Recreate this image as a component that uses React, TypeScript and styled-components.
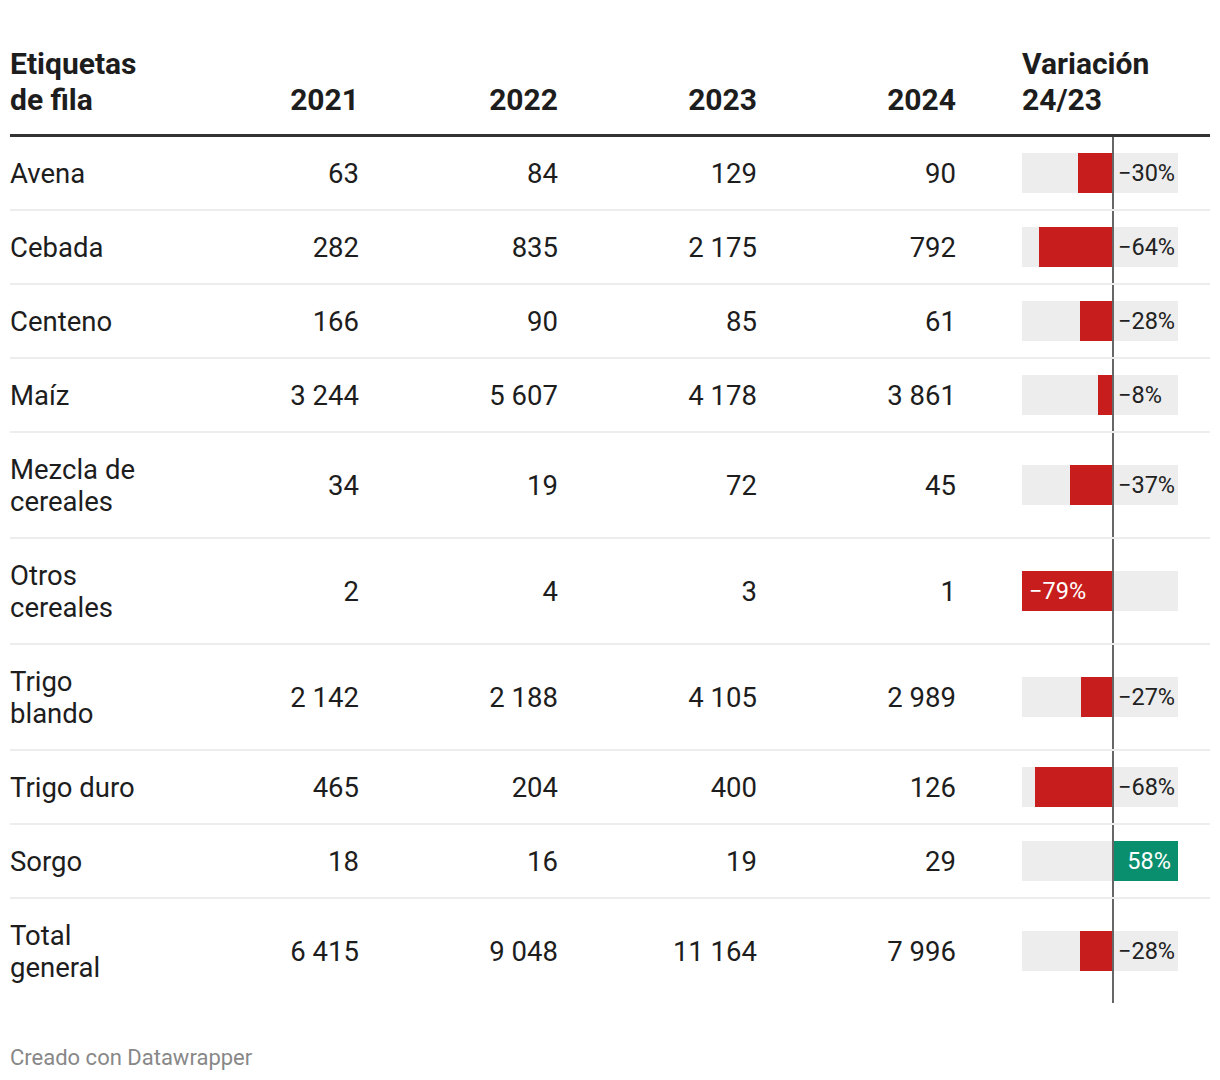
import React from "react";
import styled, { createGlobalStyle } from "styled-components";

const GlobalStyle = createGlobalStyle`
  html, body { margin: 0; padding: 0; background: #ffffff; }
  body { font-family: Roboto, "Liberation Sans", Arial, sans-serif; color: #1d1d1d; }
`;

const COLS = "149px 200px 199px 199px 199px 1fr";
const DOMAIN_MIN = -79;
const DOMAIN_MAX = 58;
const TRACK = 156;
const PX = TRACK / (DOMAIN_MAX - DOMAIN_MIN);
const NEG_W = Math.round(-DOMAIN_MIN * PX);
const POS_W = TRACK - NEG_W;

type Row = { label: string; values: string[]; change: number };

const rows: Row[] = [
  { label: "Avena", values: ["63", "84", "129", "90"], change: -30 },
  { label: "Cebada", values: ["282", "835", "2 175", "792"], change: -64 },
  { label: "Centeno", values: ["166", "90", "85", "61"], change: -28 },
  { label: "Maíz", values: ["3 244", "5 607", "4 178", "3 861"], change: -8 },
  { label: "Mezcla de cereales", values: ["34", "19", "72", "45"], change: -37 },
  { label: "Otros cereales", values: ["2", "4", "3", "1"], change: -79 },
  { label: "Trigo blando", values: ["2 142", "2 188", "4 105", "2 989"], change: -27 },
  { label: "Trigo duro", values: ["465", "204", "400", "126"], change: -68 },
  { label: "Sorgo", values: ["18", "16", "19", "29"], change: 58 },
  { label: "Total general", values: ["6 415", "9 048", "11 164", "7 996"], change: -28 },
];

const Page = styled.div`
  width: 1200px;
  padding: 46px 10px 0;
  font-family: Roboto, "Liberation Sans", Arial, sans-serif;
  color: #1d1d1d;
`;

const HeaderRow = styled.div`
  display: grid;
  grid-template-columns: ${COLS};
  align-items: end;
  padding-bottom: 16px;
  border-bottom: 3px solid #333333;
`;

const HeadCell = styled.div<{ $align?: "left" | "right"; $pad?: number }>`
  font-weight: 700;
  font-size: 30px;
  line-height: 36px;
  text-align: ${(p) => p.$align ?? "left"};
  padding-left: ${(p) => p.$pad ?? 0}px;
`;

const Body = styled.div`
  display: flex;
  flex-direction: column;
`;

const BodyRow = styled.div`
  display: grid;
  grid-template-columns: ${COLS};
  align-items: stretch;
  border-bottom: 2px solid #ededed;
  &:last-child {
    border-bottom: none;
  }
`;

const Cell = styled.div`
  display: flex;
  align-items: center;
  padding: 21px 0 19px;
  font-size: 27.5px;
  line-height: 32px;
`;

const LabelCell = styled(Cell)`
  padding-right: 14px;
`;

const NumCell = styled(Cell)`
  justify-content: flex-end;
  white-space: nowrap;
`;

const VarCell = styled(Cell)`
  position: relative;
  padding: 20px 0 20px 66px;
`;

const ZeroLine = styled.div`
  position: absolute;
  top: 0;
  bottom: 0;
  left: ${66 + NEG_W}px;
  width: 2px;
  background: #666666;
  z-index: 2;
`;

const Track = styled.div`
  display: grid;
  grid-template-columns: ${NEG_W}px ${POS_W}px;
  width: ${TRACK}px;
  height: 40px;
  margin: -4px 0;
  background: #ededed;
`;

const Side = styled.div<{ $end?: boolean }>`
  display: flex;
  justify-content: ${(p) => (p.$end ? "flex-end" : "flex-start")};
  align-items: stretch;
`;

const Bar = styled.div<{ $pos?: boolean; $labelRight?: boolean }>`
  display: flex;
  align-items: center;
  justify-content: ${(p) => (p.$labelRight ? "flex-end" : "flex-start")};
  padding: 0 7px;
  box-sizing: border-box;
  background: ${(p) => (p.$pos ? "#0a8f6e" : "#c71e1d")};
  color: #ffffff;
  font-size: 23.5px;
  white-space: nowrap;
`;

const OutLabel = styled.div`
  display: flex;
  align-items: center;
  padding-left: 6px;
  font-size: 23.5px;
  color: #222222;
  white-space: nowrap;
`;

const Footer = styled.div`
  margin-top: 41px;
  font-size: 22px;
  line-height: 28px;
  color: #888888;
`;

const fmt = (v: number) => (v < 0 ? `\u2212${Math.abs(v)}%` : `${v}%`);

function Variation({ value }: { value: number }) {
  const width = Math.abs(value) * PX;
  const inside = value === DOMAIN_MIN || value === DOMAIN_MAX;
  return (
    <VarCell>
      <Track>
        <Side $end>
          {value < 0 && (
            <Bar style={{ width }}>{inside ? fmt(value) : null}</Bar>
          )}
        </Side>
        <Side>
          {value > 0 ? (
            <Bar $pos $labelRight style={{ width }}>
              {inside ? fmt(value) : null}
            </Bar>
          ) : !inside ? (
            <OutLabel>{fmt(value)}</OutLabel>
          ) : null}
        </Side>
      </Track>
      <ZeroLine />
    </VarCell>
  );
}

export default function App() {
  return (
    <>
      <GlobalStyle />
      <Page>
        <HeaderRow>
          <HeadCell>Etiquetas de fila</HeadCell>
          <HeadCell $align="right">2021</HeadCell>
          <HeadCell $align="right">2022</HeadCell>
          <HeadCell $align="right">2023</HeadCell>
          <HeadCell $align="right">2024</HeadCell>
          <HeadCell $pad={66}>Variación 24/23</HeadCell>
        </HeaderRow>
        <Body>
          {rows.map((r) => (
            <BodyRow key={r.label}>
              <LabelCell>{r.label}</LabelCell>
              {r.values.map((v, i) => (
                <NumCell key={i}>{v}</NumCell>
              ))}
              <Variation value={r.change} />
            </BodyRow>
          ))}
        </Body>
        <Footer>Creado con Datawrapper</Footer>
      </Page>
    </>
  );
}
